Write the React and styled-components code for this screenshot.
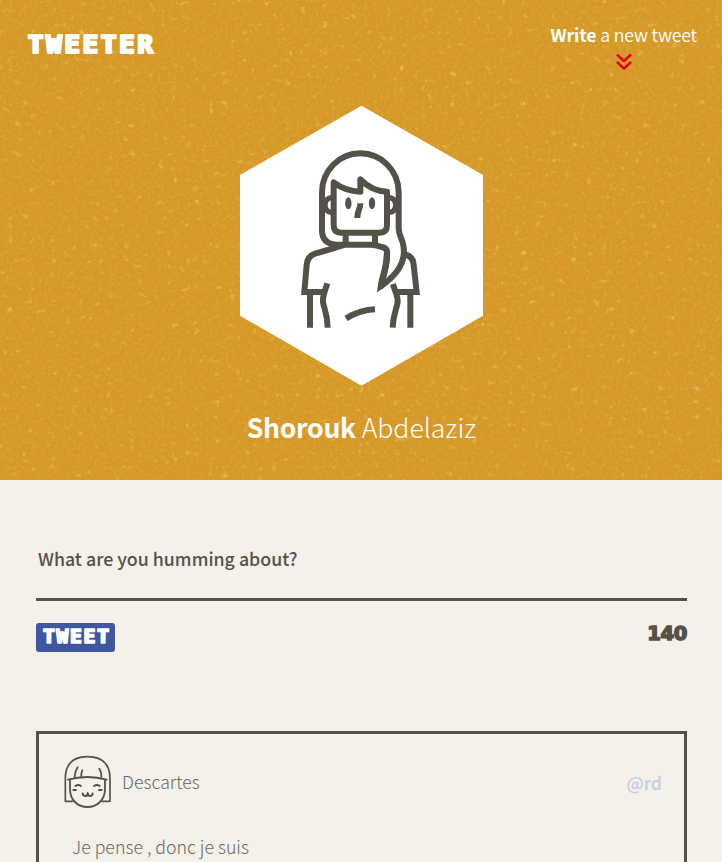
import React from "react";
import styled, { createGlobalStyle } from "styled-components";

const ink = "#545149";
const humanist = '"Noto Sans CJK JP", "Noto Sans", sans-serif';

const GlobalStyle = createGlobalStyle`
  * { box-sizing: border-box; }
  html, body { margin: 0; background: #f4f1ea; }
  body { font-family: ${humanist}; color: ${ink}; }
`;

const Page = styled.div`
  height: 862px;
  overflow: hidden;
`;

const Hero = styled.header`
  position: relative;
  height: 480px;
  background: #d69928;
  color: #fff;
  overflow: hidden;
`;

const Texture = styled.svg`
  position: absolute;
  inset: 0;
  width: 100%;
  height: 100%;
`;

const HeroContent = styled.div`
  position: relative;
  display: flex;
  flex-direction: column;
`;

const Nav = styled.nav`
  display: flex;
  justify-content: space-between;
  height: 95px;
  padding: 21px 25px 0 28px;
`;

const Block = styled.span`
  display: block;
  font-family: "DejaVu Sans Mono", monospace;
  font-weight: 700;
  font-size: ${(p) => p.$size}px;
  line-height: ${(p) => p.$line}px;
  letter-spacing: ${(p) => p.$gap}px;
  -webkit-text-stroke: ${(p) => p.$stroke}px currentColor;
  text-shadow: ${(p) => p.$spread}px 0 0 currentColor, -${(p) => p.$spread}px 0 0 currentColor;
`;

const Counter = styled.output`
  font-family: "DejaVu Sans", sans-serif;
  font-weight: 700;
  font-size: 19.500px;
  line-height: 22px;
  letter-spacing: -0.3px;
  -webkit-text-stroke: 1.500px currentColor;
`;

const Compose = styled.a`
  display: flex;
  flex-direction: column;
  align-items: center;
  font-size: 17.700px;
  line-height: 26px;
  font-weight: 350;
  letter-spacing: -0.16px;
  white-space: nowrap;
`;

const Strong = styled.b`
  font-weight: 700;
`;

const Chevrons = styled.svg`
  width: 18px;
  height: 18px;
  margin-top: 6px;
`;

const Portrait = styled.svg`
  width: 264px;
  height: 300px;
  align-self: center;
`;

const FullName = styled.h2`
  margin: 12px 0 0;
  text-align: center;
  font-size: 26.600px;
  line-height: 40px;
  font-weight: 300;
  padding-left: 1px;

  ${Strong} {
    letter-spacing: -0.3px;
  }
`;

const Main = styled.main`
  padding: 65px 35px 0 36px;
`;

const Prompt = styled.div`
  height: 56px;
  padding-left: 2px;
  border-bottom: 3px solid ${ink};
  font-size: 17.800px;
  line-height: 27px;
  font-weight: 500;
`;

const Actions = styled.div`
  display: flex;
  justify-content: space-between;
  align-items: flex-start;
  padding-top: 22px;
`;

const TweetButton = styled.button`
  width: 79px;
  height: 29px;
  padding: 0 0 2px 7px;
  border: 0;
  border-radius: 3px;
  background: #4056a1;
  color: #fff;
  text-align: left;
`;

const Card = styled.article`
  margin-top: 79px;
  height: 180px;
  padding: 21px 22px 0 25px;
  border: 3px solid ${ink};
  font-size: 17.750px;
  font-weight: 300;
`;

const CardHead = styled.div`
  display: flex;
  align-items: center;
  height: 54px;
`;

const Avatar = styled.svg`
  width: 48px;
  height: 54px;
  margin-right: 10px;
`;

const Author = styled.span`
  flex: 1;
  line-height: 26px;
  padding-bottom: 2px;
  color: #6b6861;
`;

const Handle = styled.span`
  color: #c5cbe3;
  font-size: 17.800px;
  font-weight: 500;
  line-height: 26px;
`;

const Body = styled.p`
  margin: 24px 0 0 8px;
  line-height: 26px;
  color: #6b6861;
`;

function GrainTexture() {
  return (
    <Texture aria-hidden="true">
      <filter id="grain" x="0" y="0" width="100%" height="100%" colorInterpolationFilters="sRGB">
        <feTurbulence type="fractalNoise" baseFrequency="0.31 0.29" numOctaves="2" seed="4" />
        <feColorMatrix values="0 0 0 0 0.88  0 0 0 0 0.68  0 0 0 0 0.29  1.300 0 0 0 -0.62" />
      </filter>
      <filter id="flecks" x="0" y="0" width="100%" height="100%" colorInterpolationFilters="sRGB">
        <feTurbulence type="fractalNoise" baseFrequency="0.14" numOctaves="3" seed="11" />
        <feColorMatrix values="0 0 0 0 0.91  0 0 0 0 0.75  0 0 0 0 0.4  3.500 0 0 0 -2.350" />
      </filter>
      <rect width="100%" height="100%" filter="url(#grain)" />
      <rect width="100%" height="100%" filter="url(#flecks)" />
    </Texture>
  );
}

function ProfilePortrait() {
  return (
    <Portrait viewBox="-3 0 792 900" fill="none" stroke={ink} strokeWidth="18">
      <path d="M394.500 32L759 240V662L394.500 872L30 662V240Z" fill="#fff" stroke="none" />
      <path d="M347 449H318Q276 446 276 405V292A115 117 0 0 1 506 292V400C506 418 514 428 518 442C530 486 516 530 453 573C459 540 471 520 471 480V470Q470 458 455 456Q440 450 425 449H345C315 459 280 469 255 476Q232 484 230 510L223 591H284" />
      <path d="M453 573C458 540 471 515 471 475" strokeWidth="19" strokeLinecap="round" />
      <path d="M311 262V391Q311 413 333 413H449Q471 413 471 391V290Q425 288 391 253V290Q345 288 311 262Z" strokeLinejoin="round" />
      <path d="M306 307Q285 310 285 330Q285 350 306 353M477 307Q497 310 497 330Q497 350 477 353" strokeWidth="16" />
      <path d="M391 325C391 347 382 342 382 369M347 418V448M435 418V448" />
      <ellipse cx="355" cy="325" rx="9.500" ry="18" fill={ink} stroke="none" />
      <ellipse cx="426" cy="325" rx="9.500" ry="18" fill={ink} stroke="none" />
      <path d="M526 478Q550 485 551 510L560 591H499M240 594V698M541 594V698M292 565C286 586 277 600 279 621C282 642 293 658 293 698M489 567C494 587 504 602 503 621C500 642 489 658 488 698M348 670Q390 645 435 643" />
    </Portrait>
  );
}

function DescartesAvatar() {
  return (
    <Avatar viewBox="102 105 144 162" fill="none" stroke={ink} strokeWidth="5.500" strokeLinecap="round" strokeLinejoin="round">
      <path d="M129 244H106V176Q106 110 172 110Q240 110 240 176V244H216" strokeWidth="5" />
      <path d="M114 179Q172 163 230 179M120 179V207C120 241 144 261 172 261C200 261 225 241 225 207V179" />
      <path d="M134 171Q135 153 143 142M154 169Q153 158 157 151M208 146Q215 156 214 171" />
      <path d="M136 198Q145 192 153 198M192 198Q201 192 209 198M130 210H138M207 210H215M158 220Q158 228 166 228Q173 228 173 219Q173 228 181 228Q188 228 188 220" />
    </Avatar>
  );
}

export default function App() {
  return (
    <Page>
      <GlobalStyle />
      <Hero>
        <GrainTexture />
        <HeroContent>
          <Nav>
            <Block $size={25.5} $line={47} $gap={2.9} $stroke={2} $spread={1.2}>TWEETER</Block>
            <Compose>
              <span><Strong>Write</Strong> a new tweet</span>
              <Chevrons viewBox="0 0 18 18" fill="none" stroke="#e40000" strokeWidth="2.400">
                <path d="M2 1.500L9 8L16 1.500M2 9L9 15.500L16 9" />
              </Chevrons>
            </Compose>
          </Nav>
          <ProfilePortrait />
          <FullName><Strong>Shorouk</Strong> Abdelaziz</FullName>
        </HeroContent>
      </Hero>
      <Main>
        <Prompt>What are you humming about?</Prompt>
        <Actions>
          <TweetButton>
            <Block $size={19.5} $line={28} $gap={1.8} $stroke={1.7} $spread={0.8}>TWEET</Block>
          </TweetButton>
          <Counter>140</Counter>
        </Actions>
        <Card>
          <CardHead>
            <DescartesAvatar />
            <Author>Descartes</Author>
            <Handle>@rd</Handle>
          </CardHead>
          <Body>Je pense , donc je suis</Body>
        </Card>
      </Main>
    </Page>
  );
}
